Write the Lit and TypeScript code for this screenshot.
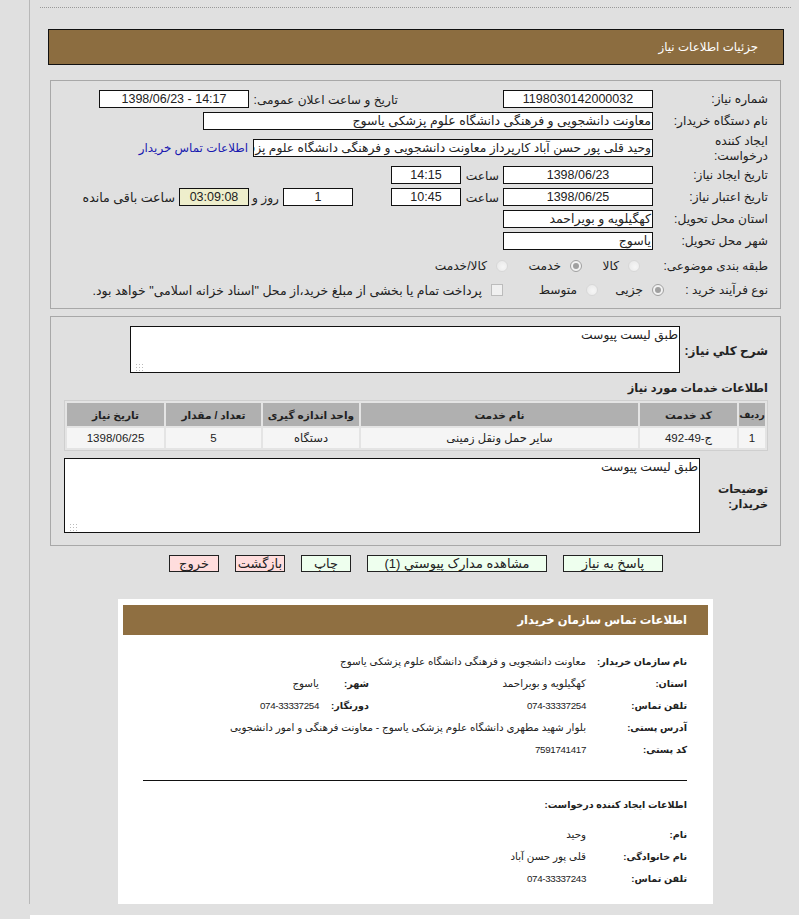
import { LitElement, html, css } from "lit";
import { customElement } from "lit/decorators.js";

@customElement("app-root")
export class AppRoot extends LitElement {
  static styles = css`
    :host { display: block; width: 799px; height: 919px; overflow: hidden; background: #e0e0e0;
      font-family: "Liberation Sans", "DejaVu Sans", sans-serif; font-size: 12.2px; color: #222; }
    * { box-sizing: border-box; }
    .root { display: flex; height: 919px; }
    .side { width: 30px; height: 904px; border-right: 1px solid #b8b8b8; flex: none; }
    .wrap { width: 769px; height: 919px; background: #fff; flex: none; }
    .main { height: 915px; background: #e0e0e0; padding: 7px 8px 0 10px; }
    .dots { height: 1px; border-top: 1px dotted #999; }
    .title { margin: 21px 0 0 8px; width: 736px; height: 36px; background: #8c6d40; border: 1px solid #111;
      color: #fff; direction: rtl; padding: 0 25px; display: flex; align-items: center; font-size: 11.8px; }
    .panel { width: 731px; margin-left: 10px; border: 1px solid #a8a8a8; direction: rtl; }
    .p1 { margin-top: 15px; height: 229px; padding: 9px 12px 0 0; }
    .row { display: flex; align-items: center; height: 18px; margin-bottom: 4px; white-space: nowrap; }
    .row.tall { height: 28px; }
    .row.opt { height: 24px; margin-bottom: 0; }
    .lbl { width: 115px; flex: none; white-space: normal; line-height: 15px; padding-top: 1px; }
    .opt .lbl { font-size: 12px; }
    .box { height: 18px; background: #fff; border: 1px solid #111; flex: none; font-size: 12.5px; line-height: 17px;
      text-align: center; overflow: hidden; white-space: nowrap; color: #222; }
    .box.start { text-align: right; padding-right: 1px; }
    .w150 { width: 150px; } .w70 { width: 70px; } .w450 { width: 450px; } .w400 { width: 400px; font-size: 12.3px; }
    .ltr { direction: ltr; }
    .count { background: #eeeecc; }
    .pub { width: 254px; flex: none; padding-right: 105px; padding-top: 1px; }
    .hour { width: 42px; flex: none; padding-right: 4px; padding-top: 1px; }
    .gap38 { width: 38px; flex: none; }
    .days { width: 34px; flex: none; padding-right: 4px; padding-top: 1px; }
    .rest { padding-right: 4px; font-size: 12.6px; padding-top: 1px; }
    .link { color: #1a1ab0; padding-right: 5px; font-size: 11.9px; }
    .opt-item { display: flex; align-items: center; flex: none; gap: 9px; }
    .kala { width: 71px; padding-right: 13px; }
    .khedmat { width: 74px; }
    .jozi { width: 66px; margin-right: -11px; }
    .motavaset { width: 95px; }
    .pay { font-size: 12.5px; }
    .radio { width: 12px; height: 12px; border-radius: 50%; border: 1px solid #d8d8d8; flex: none;
      background: radial-gradient(circle at 60% 60%, #f6f6f6, #e6e6e6); display: flex; align-items: center; justify-content: center; }
    .radio.on { border-color: #a0a0a0; background: #f2f2f2; }
    .radio.on::after { content: ""; width: 6px; height: 6px; border-radius: 50%; background: #a0a0a0; }
    .check { width: 12px; height: 12px; border: 1px solid #bcbcbc; background: #f0f0f0; flex: none; }
    .p2 { margin-top: 7px; height: 230px; padding: 9px 12px 0 0; }
    .bold { font-weight: bold; font-size: 12px; color: #222; }
    .area { background: #fff; border: 1px solid #111; position: relative; flex: none; padding: 0 1px; line-height: 16px; font-size: 12.3px; }
    .grip { position: absolute; left: 4px; bottom: 1px; width: 8px; height: 8px;
      background-image: radial-gradient(#bbb 0.6px, transparent 0.8px); background-size: 3px 3px; }
    .desc { display: flex; }
    .desc .bold { width: 88px; flex: none; align-self: center; padding-top: 3px; }
    .a1 { width: 550px; height: 47px; }
    .heading { margin-top: 6px; height: 18px; line-height: 18px; font-size: 11.4px; }
    table { width: 704px; margin-top: 3px; border: 1px solid #cfcfcf; border-spacing: 2px; table-layout: fixed; background: #e4e4e4; }
    th { height: 23px; padding: 0; background: #b0b0b0; font-size: 10.6px; font-weight: bold; color: #222; white-space: nowrap; }
    th.tight { font-size: 9.6px; }
    td { height: 20px; padding: 0; background: #f5f5f5; text-align: center; font-size: 11.5px; }
    .d2 { margin-top: 7px; }
    .d2 .bold { width: 68px; line-height: 15px; font-size: 11.2px; }
    .a2 { width: 636px; height: 75px; }
    .buttons { display: flex; direction: rtl; gap: 16px; margin: 9px 0 0 0; padding-right: 128px; }
    .btn { height: 17px; border: 1px solid #222; font-size: 13px; line-height: 15px; text-align: center; color: #222; flex: none; overflow: hidden; }
    .go { background: #eeffee; } .stop { background: #ffdddd; }
    .w100 { width: 100px; } .w180 { width: 180px; } .w50 { width: 50px; }
    .card { width: 595px; height: 305px; margin: 27px 0 0 78px; background: #fff; direction: rtl; padding: 6px 5px 0; font-size: 10.3px; color: #222; }
    .chead { height: 30px; background: #8f6f41; color: #fff; font-weight: bold; font-size: 11.5px; display: flex; align-items: center; padding-right: 21px; }
    .info { padding: 15px 21px 0 20px; }
    .irow { display: flex; align-items: center; height: 22px; white-space: nowrap; }
    .k { width: 101px; flex: none; font-weight: bold; font-size: 9.6px; }
    .v { width: 217px; flex: none; }
    .k2 { width: 50px; flex: none; font-weight: bold; font-size: 9.6px; }
    .num { font-size: 9.8px; letter-spacing: -0.35px; }
    .rule { height: 1px; background: #111; margin: 20px 0 0 0; }
    .sub { font-weight: bold; font-size: 9.5px; margin: 17px 0 11px; height: 14px; line-height: 14px; }
  `;

  render() {
    return html`<div class="root">
      <div class="side"></div>
      <div class="wrap"><div class="main">
        <div class="dots"></div>
        <div class="title">جزئیات اطلاعات نیاز</div>

        <div class="panel p1">
          <div class="row"><div class="lbl">شماره نیاز:</div><div class="box w150">1198030142000032</div>
            <div class="pub">تاریخ و ساعت اعلان عمومی:</div><div class="box w150 ltr">1398/06/23 - 14:17</div></div>
          <div class="row"><div class="lbl">نام دستگاه خریدار:</div><div class="box start w450">معاونت دانشجویی و فرهنگی دانشگاه علوم پزشکی یاسوج</div></div>
          <div class="row tall"><div class="lbl">ایجاد کننده<br>درخواست:</div><div class="box start w400">وحید قلی پور حسن آباد کارپرداز معاونت دانشجویی و فرهنگی دانشگاه علوم پزشکی یاسوج</div>
            <a class="link">اطلاعات تماس خریدار</a></div>
          <div class="row"><div class="lbl">تاریخ ایجاد نیاز:</div><div class="box w150">1398/06/23</div>
            <div class="hour">ساعت</div><div class="box w70">14:15</div></div>
          <div class="row"><div class="lbl">تاریخ اعتبار نیاز:</div><div class="box w150">1398/06/25</div>
            <div class="hour">ساعت</div><div class="box w70">10:45</div><div class="gap38"></div>
            <div class="box w70">1</div><div class="days">روز و</div><div class="box w70 count">03:09:08</div><div class="rest">ساعت باقی مانده</div></div>
          <div class="row"><div class="lbl">استان محل تحویل:</div><div class="box start w150">کهگیلویه و بویراحمد</div></div>
          <div class="row"><div class="lbl">شهر محل تحویل:</div><div class="box start w150">یاسوج</div></div>
          <div class="row opt"><div class="lbl">طبقه بندی موضوعی:</div>
            <div class="opt-item kala"><span class="radio"></span><span>کالا</span></div>
            <div class="opt-item khedmat"><span class="radio on"></span><span>خدمت</span></div>
            <div class="opt-item"><span class="radio"></span><span>کالا/خدمت</span></div></div>
          <div class="row opt"><div class="lbl">نوع فرآیند خرید :</div>
            <div class="opt-item jozi"><span class="radio on"></span><span>جزیی</span></div>
            <div class="opt-item motavaset"><span class="radio"></span><span>متوسط</span></div>
            <div class="opt-item"><span class="check"></span><span class="pay">پرداخت تمام یا بخشی از مبلغ خرید،از محل "اسناد خزانه اسلامی" خواهد بود.</span></div></div>
        </div>

        <div class="panel p2">
          <div class="desc"><div class="bold">شرح کلي نياز:</div><div class="area a1">طبق لیست پیوست<span class="grip"></span></div></div>
          <div class="bold heading">اطلاعات خدمات مورد نیاز</div>
          <table>
            <colgroup><col style="width:26px"><col style="width:97px"><col style="width:277px"><col style="width:96px"><col style="width:95px"><col></colgroup>
            <tr><th class="tight">ردیف</th><th>کد خدمت</th><th>نام خدمت</th><th>واحد اندازه گیری</th><th>تعداد / مقدار</th><th>تاریخ نیاز</th></tr>
            <tr><td>1</td><td>ج-49-492</td><td>سایر حمل ونقل زمینی</td><td>دستگاه</td><td>5</td><td>1398/06/25</td></tr>
          </table>
          <div class="desc d2"><div class="bold">توضیحات خریدار:</div><div class="area a2">طبق لیست پیوست<span class="grip"></span></div></div>
        </div>

        <div class="buttons">
          <div class="btn go w100">پاسخ به نیاز</div>
          <div class="btn go w180">مشاهده مدارک پیوستي (1)</div>
          <div class="btn go w50">چاپ</div>
          <div class="btn stop w50">بازگشت</div>
          <div class="btn stop w50">خروج</div>
        </div>

        <div class="card">
          <div class="chead">اطلاعات تماس سازمان خریدار</div>
          <div class="info">
            <div class="irow"><div class="k">نام سازمان خریدار:</div><div>معاونت دانشجویی و فرهنگی دانشگاه علوم پزشکی یاسوج</div></div>
            <div class="irow"><div class="k">استان:</div><div class="v">کهگیلویه و بویراحمد</div><div class="k2">شهر:</div><div>یاسوج</div></div>
            <div class="irow"><div class="k">تلفن تماس:</div><div class="v num">074-33337254</div><div class="k2">دورنگار:</div><div class="num">074-33337254</div></div>
            <div class="irow"><div class="k">آدرس پستی:</div><div>بلوار شهید مطهری دانشگاه علوم پزشکی یاسوج - معاونت فرهنگی و امور دانشجویی</div></div>
            <div class="irow"><div class="k">کد پستی:</div><div class="num">7591741417</div></div>
            <div class="rule"></div>
            <div class="sub">اطلاعات ایجاد کننده درخواست:</div>
            <div class="irow"><div class="k">نام:</div><div>وحید</div></div>
            <div class="irow"><div class="k">نام خانوادگی:</div><div>قلی پور حسن آباد</div></div>
            <div class="irow"><div class="k">تلفن تماس:</div><div class="num">074-33337243</div></div>
          </div>
        </div>
      </div></div>
    </div>`;
  }
}
